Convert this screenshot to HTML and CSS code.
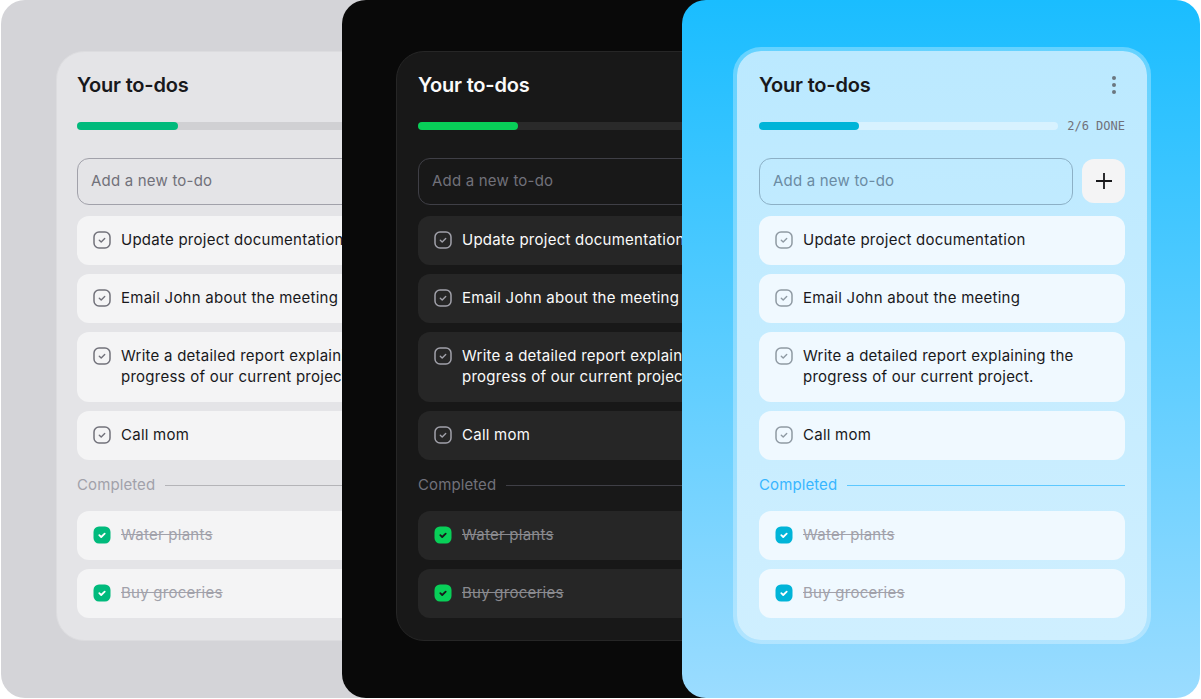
FILE: index.html
```html
<!DOCTYPE html>
<html lang="en">
	<head>
		<meta charset="UTF-8" />
		<title>Your to-dos</title>
		<link rel="stylesheet" href="styles.css">
	</head>
	<body>
		<svg class="defs" width="0" height="0">
			<symbol id="box" viewBox="0 0 18 18">
				<rect x="1" y="1" width="16" height="16" rx="5" fill="none" stroke="currentColor" stroke-width="1.5" />
				<path d="M6.3 9.2l1.9 1.8L11.7 7.6" fill="none" stroke="currentColor" stroke-width="1.4" stroke-linecap="round" stroke-linejoin="round" />
			</symbol>
			<symbol id="done" viewBox="0 0 18 18">
				<rect x="0.5" y="0.5" width="17" height="17" rx="5.5" fill="currentColor" />
				<path d="M6.3 9.2l1.9 1.8L11.7 7.6" fill="none" stroke="var(--tick)" stroke-width="1.8" stroke-linecap="round" stroke-linejoin="round" />
			</symbol>
			<symbol id="cross" viewBox="0 0 18 18">
				<path d="M9 1v16M1 9h16" fill="none" stroke="currentColor" stroke-width="1.8" />
			</symbol>
		</svg>

		<div class="stack">
			<section class="panel light">
				<div class="card">
					<div class="head">
						<h1>Your to-dos</h1>
						<span class="more"><i></i><i></i><i></i></span>
					</div>
					<div class="progress">
						<div class="track"><div class="fill"></div></div>
						<span class="count">2/6 DONE</span>
					</div>
					<div class="add">
						<div class="field">Add a new to-do</div>
						<button class="plus"><svg><use href="#cross" /></svg></button>
					</div>
					<ul class="list">
						<li><svg class="check"><use href="#box" /></svg><span>Update project documentation</span></li>
						<li><svg class="check"><use href="#box" /></svg><span>Email John about the meeting</span></li>
						<li><svg class="check"><use href="#box" /></svg><span>Write a detailed report explaining the progress of our current project.</span></li>
						<li><svg class="check"><use href="#box" /></svg><span>Call mom</span></li>
					</ul>
					<div class="divider">Completed</div>
					<ul class="list finished">
						<li><svg class="check"><use href="#done" /></svg><span>Water plants</span></li>
						<li><svg class="check"><use href="#done" /></svg><span>Buy groceries</span></li>
					</ul>
				</div>
			</section>

			<section class="panel dark">
				<div class="card">
					<div class="head">
						<h1>Your to-dos</h1>
						<span class="more"><i></i><i></i><i></i></span>
					</div>
					<div class="progress">
						<div class="track"><div class="fill"></div></div>
						<span class="count">2/6 DONE</span>
					</div>
					<div class="add">
						<div class="field">Add a new to-do</div>
						<button class="plus"><svg><use href="#cross" /></svg></button>
					</div>
					<ul class="list">
						<li><svg class="check"><use href="#box" /></svg><span>Update project documentation</span></li>
						<li><svg class="check"><use href="#box" /></svg><span>Email John about the meeting</span></li>
						<li><svg class="check"><use href="#box" /></svg><span>Write a detailed report explaining the progress of our current project.</span></li>
						<li><svg class="check"><use href="#box" /></svg><span>Call mom</span></li>
					</ul>
					<div class="divider">Completed</div>
					<ul class="list finished">
						<li><svg class="check"><use href="#done" /></svg><span>Water plants</span></li>
						<li><svg class="check"><use href="#done" /></svg><span>Buy groceries</span></li>
					</ul>
				</div>
			</section>

			<section class="panel blue">
				<div class="card">
					<div class="head">
						<h1>Your to-dos</h1>
						<span class="more"><i></i><i></i><i></i></span>
					</div>
					<div class="progress">
						<div class="track"><div class="fill"></div></div>
						<span class="count">2/6 DONE</span>
					</div>
					<div class="add">
						<div class="field">Add a new to-do</div>
						<button class="plus"><svg><use href="#cross" /></svg></button>
					</div>
					<ul class="list">
						<li><svg class="check"><use href="#box" /></svg><span>Update project documentation</span></li>
						<li><svg class="check"><use href="#box" /></svg><span>Email John about the meeting</span></li>
						<li><svg class="check"><use href="#box" /></svg><span>Write a detailed report explaining the progress of our current project.</span></li>
						<li><svg class="check"><use href="#box" /></svg><span>Call mom</span></li>
					</ul>
					<div class="divider">Completed</div>
					<ul class="list finished">
						<li><svg class="check"><use href="#done" /></svg><span>Water plants</span></li>
						<li><svg class="check"><use href="#done" /></svg><span>Buy groceries</span></li>
					</ul>
				</div>
			</section>
		</div>
	</body>
</html>
```

FILE: styles.css
```css
html,
body {
	margin: 0;
	background-color: white;
}

body {
	font-family: Inter, "Noto Sans", sans-serif;
	overflow: hidden;
}

.defs {
	position: absolute;
}

.stack {
	display: flex;
	padding-left: 1px;
}

.panel {
	flex: none;
	box-sizing: border-box;
	width: 518px;
	height: 698px;
	padding: 47px 0 0 51px;
	border-radius: 24px;
	background: var(--panel);
}

.panel + .panel {
	margin-left: -177px;
}

.panel + .blue {
	margin-left: -178px;
}

.light {
	--panel: #d4d4d8;
	--card: #e4e4e7;
	--edge: #dcdcdf;
	--text: #18181b;
	--muted: #71717a;
	--count: #71717a;
	--dots: #71717a;
	--track: #d0d0d3;
	--fill: #00ba7c;
	--line: #a1a1aa;
	--item: #f4f4f5;
	--button: #f4f4f5;
	--box: #71717a;
	--label: #a1a1aa;
	--rule: #b4b4b8;
	--gone: #a1a1aa;
	--tick: white;
}

.dark {
	--panel: #090909;
	--card: #181818;
	--edge: #262626;
	--text: #fafafa;
	--muted: #71717a;
	--count: #71717a;
	--dots: #a1a1aa;
	--track: #2a2a2a;
	--fill: #08cf58;
	--line: #3f3f46;
	--item: #262626;
	--button: #262626;
	--box: #a1a1aa;
	--label: #71717a;
	--rule: #3f3f46;
	--gone: #8a8a8f;
	--tick: #18181b;
}

.blue {
	--panel: linear-gradient(180deg, #1abdff 0%, #9bdcff 100%);
	--card: linear-gradient(180deg, #bbe9ff 0%, #cfefff 100%);
	--edge: rgba(255, 255, 255, 0.3);
	--text: #18181b;
	--muted: #6b8ba3;
	--count: #71717a;
	--dots: #6b7680;
	--track: rgba(255, 255, 255, 0.4);
	--fill: #00b4d8;
	--line: #8cb0c6;
	--item: #f0f9ff;
	--button: #f4f4f5;
	--box: #8f9aa3;
	--label: #38b6ff;
	--rule: #5cc8ff;
	--gone: #a1a1aa;
	--tick: white;
}

.card {
	box-sizing: border-box;
	width: 418px;
	height: 597px;
	padding: 20px 22px 0;
	border: 4px solid var(--edge);
	border-radius: 28px;
	background: var(--card);
	background-clip: padding-box;
	color: var(--text);
}

.light .card,
.dark .card {
	border-width: 1px;
	width: 412px;
	height: 590px;
	margin: 4px 0 0 3px;
	padding: 19px 21px 0;
	background-clip: border-box;
}

.light .card {
	margin-left: 4px;
	padding-left: 20px;
}

.head {
	display: flex;
	align-items: center;
	justify-content: space-between;
	height: 28px;
}

h1 {
	margin: 0;
	font-size: 20px;
	font-weight: 600;
	letter-spacing: -0.2px;
}

.more {
	display: flex;
	flex-direction: column;
	gap: 3px;
	margin-right: 9px;
}

.more i {
	width: 4px;
	height: 4px;
	border-radius: 50%;
	background-color: var(--dots);
}

.progress {
	display: flex;
	align-items: center;
	gap: 9px;
	margin-top: 20px;
}

.track {
	flex: 1;
	height: 8px;
	border-radius: 4px;
	background: var(--track);
}

.fill {
	width: 33.3%;
	height: 100%;
	border-radius: 4px;
	background-color: var(--fill);
}

.count {
	font-family: "DejaVu Sans Mono", monospace;
	font-size: 12px;
	line-height: 14px;
	color: var(--count);
}

.add {
	display: flex;
	align-items: flex-start;
	gap: 9px;
	margin-top: 25px;
}

.field {
	flex: 1;
	box-sizing: border-box;
	height: 47px;
	padding: 0 13px;
	border: 1px solid var(--line);
	border-radius: 12px;
	font-size: 15px;
	letter-spacing: 0.2px;
	line-height: 44px;
	color: var(--muted);
}

.plus {
	display: flex;
	align-items: center;
	justify-content: center;
	width: 43px;
	height: 44px;
	margin-top: 1px;
	padding: 0;
	border: none;
	border-radius: 12px;
	background-color: var(--button);
	color: var(--text);
}

.plus svg {
	width: 18px;
	height: 18px;
}

.list {
	display: flex;
	flex-direction: column;
	gap: 9px;
	margin: 11px 0 0;
	padding: 0;
	list-style: none;
}

.list li {
	display: flex;
	gap: 10px;
	padding: 13px 16px 15px;
	border-radius: 12px;
	background-color: var(--item);
	font-size: 15px;
	letter-spacing: 0.25px;
	line-height: 21px;
}

.check {
	flex: none;
	width: 18px;
	height: 18px;
	margin-top: 2px;
	color: var(--box);
}

.divider {
	display: flex;
	align-items: center;
	gap: 10px;
	margin-top: 16px;
	font-size: 15px;
	letter-spacing: 0.1px;
	line-height: 18px;
	color: var(--label);
}

.divider::after {
	content: "";
	flex: 1;
	height: 1px;
	background-color: var(--rule);
}

.finished {
	margin-top: 17px;
}

.finished .check {
	color: var(--fill);
}

.finished span {
	color: var(--gone);
	text-decoration: line-through;
}
```
